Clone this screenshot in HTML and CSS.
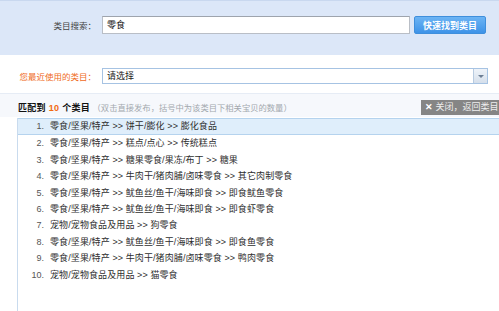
FILE: index.html
```html
<!DOCTYPE html>
<html lang="zh-CN">
<head>
    <meta charset="UTF-8">
    <title>类目搜索</title>
    <link rel="stylesheet" href="styles.css">
</head>
<body>
    <div class="search-bar">
        <span class="label">类目搜索：</span>
        <div class="search-input">零食</div>
        <button class="search-btn">快速找到类目</button>
    </div>

    <div class="recent-row">
        <span class="label recent-label">您最近使用的类目：</span>
        <div class="recent-select">
            <span>请选择</span>
            <span class="select-arrow"></span>
        </div>
    </div>

    <div class="result-head">
        <div class="result-title">
            <b>匹配到 <em>10</em> 个类目</b>
            <span class="hint">（双击直接发布，括号中为该类目下相关宝贝的数量）</span>
        </div>
        <div class="close-btn"><span class="close-x">✕</span> 关闭，返回类目</div>
    </div>

    <ul class="result-list">
        <li class="active"><span class="num">1.</span>零食/坚果/特产 &gt;&gt; 饼干/膨化 &gt;&gt; 膨化食品</li>
        <li><span class="num">2.</span>零食/坚果/特产 &gt;&gt; 糕点/点心 &gt;&gt; 传统糕点</li>
        <li><span class="num">3.</span>零食/坚果/特产 &gt;&gt; 糖果零食/果冻/布丁 &gt;&gt; 糖果</li>
        <li><span class="num">4.</span>零食/坚果/特产 &gt;&gt; 牛肉干/猪肉脯/卤味零食 &gt;&gt; 其它肉制零食</li>
        <li><span class="num">5.</span>零食/坚果/特产 &gt;&gt; 鱿鱼丝/鱼干/海味即食 &gt;&gt; 即食鱿鱼零食</li>
        <li><span class="num">6.</span>零食/坚果/特产 &gt;&gt; 鱿鱼丝/鱼干/海味即食 &gt;&gt; 即食虾零食</li>
        <li><span class="num">7.</span>宠物/宠物食品及用品 &gt;&gt; 狗零食</li>
        <li><span class="num">8.</span>零食/坚果/特产 &gt;&gt; 鱿鱼丝/鱼干/海味即食 &gt;&gt; 即食鱼零食</li>
        <li><span class="num">9.</span>零食/坚果/特产 &gt;&gt; 牛肉干/猪肉脯/卤味零食 &gt;&gt; 鸭肉零食</li>
        <li><span class="num">10.</span>宠物/宠物食品及用品 &gt;&gt; 猫零食</li>
    </ul>
</body>
</html>
```

FILE: styles.css
```css
body {
    margin: 0;
    height: 311px;
    overflow: hidden;
    background: #fff;
    font-family: "Liberation Sans", "Noto Sans CJK SC", sans-serif;
    font-size: 9px;
    color: #333;
}

.label {
    width: 96px;
    text-align: right;
    flex-shrink: 0;
    font-size: 8.5px;
}

/* top search band */
.search-bar {
    display: flex;
    align-items: center;
    border-top: 1px solid #c9d8ef;
    background: #dce7f8;
    box-sizing: border-box;
    height: 55px;
    padding-bottom: 6px;
    color: #444;
}

.search-input {
    width: 308px;
    height: 18px;
    margin-left: 6px;
    box-sizing: border-box;
    padding-left: 4px;
    line-height: 16px;
    background: #fff;
    border: 1px solid #b9bec6;
    border-top-color: #9ea4ad;
    color: #111;
}

.search-btn {
    width: 72px;
    height: 18px;
    margin-left: 4px;
    padding: 0;
    border: 1px solid #3f8fdc;
    border-radius: 2px;
    background: linear-gradient(#6cb4f4, #3e93e8);
    color: #fff;
    font-family: inherit;
    font-size: 9px;
    font-weight: bold;
}

/* recent categories */
.recent-row {
    display: flex;
    align-items: center;
    height: 38px;
    padding-top: 3px;
    box-sizing: border-box;
}

.recent-label {
    color: #ef6a1c;
}

.recent-select {
    display: flex;
    align-items: center;
    justify-content: space-between;
    width: 386px;
    height: 16px;
    margin-left: 6px;
    box-sizing: border-box;
    padding-left: 4px;
    border: 1px solid #a6c3e3;
    color: #222;
}

.select-arrow {
    width: 13px;
    height: 14px;
    background: linear-gradient(#eef3f9, #d5dfeb);
    border-left: 1px solid #b8cbe0;
    position: relative;
}

.select-arrow::after {
    content: "";
    position: absolute;
    left: 4px;
    top: 6px;
    border-left: 3px solid transparent;
    border-right: 3px solid transparent;
    border-top: 3px solid #6d7f95;
}

/* result header */
.result-head {
    display: flex;
    justify-content: space-between;
    align-items: center;
    height: 24px;
    padding-top: 4px;
    border-top: 1px solid #e6ecf5;
    background: #f6f8fc;
    padding-left: 18px;
    box-sizing: border-box;
}

.result-title b {
    color: #111;
    letter-spacing: 0.3px;
}

.result-title em {
    font-style: normal;
    color: #f26a10;
}

.hint {
    color: #a3a8ae;
    font-size: 8.3px;
}

.close-btn {
    width: 78px;
    height: 15px;
    line-height: 15px;
    padding-left: 4px;
    box-sizing: border-box;
    background: #858585;
    color: #eee;
}

.close-x {
    font-weight: bold;
    color: #fff;
}

/* result list */
.result-list {
    list-style: none;
    margin: 1px 0 0 17px;
    padding: 0;
    height: 200px;
    border-left: 1px solid #c9dbee;
    letter-spacing: 0.1px;
    color: #2e2e2e;
}

.result-list li {
    display: flex;
    height: 16.4px;
    line-height: 16.4px;
    white-space: nowrap;
}

.result-list li.active {
    background: #dfeefb;
    border-top: 1px solid #b5d3ee;
    border-bottom: 1px solid #b5d3ee;
    height: 15.4px;
    line-height: 15.4px;
}

.num {
    width: 26px;
    padding-right: 6px;
    text-align: right;
    color: #555;
    flex-shrink: 0;
    letter-spacing: 0;
}
```
